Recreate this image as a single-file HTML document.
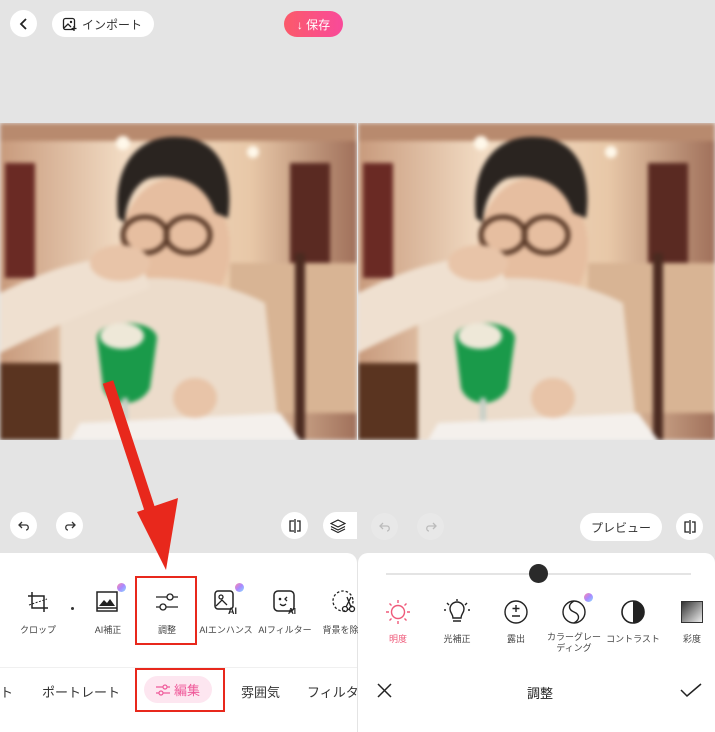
<!DOCTYPE html>
<html><head><meta charset="utf-8"><style>
*{margin:0;padding:0;box-sizing:border-box}
body{width:715px;height:732px;background:#e4e4e4;position:relative;overflow:hidden;font-family:"Liberation Sans","Noto Sans CJK JP",sans-serif;color:#333}
.a{position:absolute}
.circ{position:absolute;width:27px;height:27px;border-radius:50%;background:#fff;display:flex;align-items:center;justify-content:center}
.lbl{position:absolute;font-size:9px;color:#444;text-align:center;white-space:nowrap;transform:translateX(-50%)}
.ic{position:absolute;transform:translate(-50%,-50%)}
.ph{position:absolute;top:123px;width:357px;height:317px;overflow:hidden}
.ph svg{filter:blur(2px)}
</style></head><body>
<svg width="0" height="0" style="position:absolute"><defs>
<linearGradient id="bg" x1="0" y1="0" x2="1" y2="0"><stop offset="0" stop-color="#c89a7c"/><stop offset=".35" stop-color="#f2dcc4"/><stop offset=".7" stop-color="#e8c8a8"/><stop offset="1" stop-color="#a0705a"/></linearGradient>
<symbol id="photo" viewBox="0 0 357 317">
<rect width="357" height="317" fill="url(#bg)"/>
<rect x="0" y="0" width="357" height="18" fill="#b88a6e"/>
<rect x="5" y="40" width="30" height="115" fill="#6a2a24"/>
<rect x="290" y="40" width="40" height="100" fill="#5a2a22"/>
<rect x="230" y="140" width="127" height="150" fill="#d8b494"/>
<rect x="295" y="130" width="10" height="187" fill="#4a2a20"/>
<rect x="0" y="240" width="60" height="77" fill="#5a3420"/>
<circle cx="123" cy="20" r="7" fill="#fff8ea"/><circle cx="253" cy="29" r="6" fill="#fff8ea"/>
<ellipse cx="175" cy="125" rx="55" ry="70" fill="#e6bea0"/>
<path d="M118 95 C112 40 140 12 178 14 C215 14 235 45 228 95 L215 90 C205 60 180 50 150 55 C135 60 125 80 125 100Z" fill="#2a2420"/>
<ellipse cx="145" cy="112" rx="22" ry="18" fill="none" stroke="#5a3a28" stroke-width="5"/>
<ellipse cx="188" cy="112" rx="22" ry="18" fill="none" stroke="#5a3a28" stroke-width="5"/>
<path d="M60 175 C100 150 200 145 265 180 L280 317 L60 317Z" fill="#ecdccb"/>
<path d="M0 170 C40 150 90 130 140 135 L150 165 C110 180 60 200 0 230Z" fill="#efe0d0"/>
<ellipse cx="120" cy="140" rx="30" ry="18" fill="#e8c4a8"/>
<path d="M97 215 C97 195 155 195 157 215 L150 265 C140 285 110 285 103 265Z" fill="#1a9a4a"/>
<ellipse cx="122" cy="213" rx="22" ry="13" fill="#eee8d8"/>
<rect x="122" y="275" width="6" height="30" fill="#c8d0c8"/>
<path d="M80 300 L280 290 L300 317 L70 317Z" fill="#f4f0ec"/>
<ellipse cx="195" cy="275" rx="22" ry="20" fill="#e8c4a8"/>
</symbol></defs></svg>

<div class="circ" style="left:10px;top:10px"><svg width="14" height="14" viewBox="0 0 14 14"><path d="M9 2 L4 7 L9 12" fill="none" stroke="#222" stroke-width="1.8"/></svg></div>
<div class="a" style="left:52px;top:11px;width:102px;height:26px;border-radius:13px;background:#fff;font-size:12px;display:flex;align-items:center;padding-left:10px;gap:5px">
<svg width="15" height="15" viewBox="0 0 15 15"><rect x="1.5" y="1.5" width="11" height="11" rx="2" fill="none" stroke="#222" stroke-width="1.3"/><path d="M2 11 L6 7 L9 10" fill="none" stroke="#222" stroke-width="1.3"/><circle cx="9" cy="5" r="1.2" fill="#222"/><path d="M12 9v5M9.5 11.5h5" stroke="#222" stroke-width="1.3"/></svg>インポート</div>
<div class="a" style="left:284px;top:11px;width:59px;height:26px;border-radius:13px;background:linear-gradient(90deg,#fb5a6a,#f94a9a);color:#fff;font-size:12px;display:flex;align-items:center;justify-content:center;gap:3px">↓ 保存</div>

<div class="ph" style="left:0"><svg width="357" height="317"><use href="#photo"/></svg></div>
<div class="ph" style="left:358px"><svg width="357" height="317"><use href="#photo"/></svg></div>

<div class="circ" style="left:10px;top:512px"><svg width="14" height="14" viewBox="0 0 14 14"><path d="M5 3 L2 6 L5 9 M2 6 H9 C12 6 12 11 9 11" fill="none" stroke="#333" stroke-width="1.3"/></svg></div>
<div class="circ" style="left:56px;top:512px"><svg width="14" height="14" viewBox="0 0 14 14"><path d="M9 3 L12 6 L9 9 M12 6 H5 C2 6 2 11 5 11" fill="none" stroke="#333" stroke-width="1.3"/></svg></div>
<div class="circ" style="left:281px;top:512px"><svg width="16" height="14" viewBox="0 0 16 14"><path d="M7 2H3v10h4M8 0v14M10 2h3v10h-3" fill="none" stroke="#222" stroke-width="1.3"/></svg></div>
<div class="a" style="left:323px;top:512px;width:34px;height:27px;border-radius:14px 0 0 14px;background:#fff;display:flex;align-items:center;padding-left:7px"><svg width="16" height="16" viewBox="0 0 16 16"><path d="M8 2L15 5.5L8 9L1 5.5Z M1 8.5L8 12L15 8.5 M1 11L8 14.5L15 11" fill="none" stroke="#222" stroke-width="1.2"/></svg></div>

<div class="circ" style="left:371px;top:513px;background:#e8e8e8"><svg width="14" height="14" viewBox="0 0 14 14"><path d="M5 3 L2 6 L5 9 M2 6 H9 C12 6 12 11 9 11" fill="none" stroke="#bbb" stroke-width="1.3"/></svg></div>
<div class="circ" style="left:417px;top:513px;background:#e8e8e8"><svg width="14" height="14" viewBox="0 0 14 14"><path d="M9 3 L12 6 L9 9 M12 6 H5 C2 6 2 11 5 11" fill="none" stroke="#bbb" stroke-width="1.3"/></svg></div>
<div class="a" style="left:580px;top:513px;width:82px;height:28px;border-radius:14px;background:#fff;font-size:12px;display:flex;align-items:center;justify-content:center">プレビュー</div>
<div class="circ" style="left:676px;top:513px"><svg width="16" height="14" viewBox="0 0 16 14"><path d="M7 2H3v10h4M8 0v14M10 2h3v10h-3" fill="none" stroke="#222" stroke-width="1.3"/></svg></div>

<div class="a" style="left:0;top:553px;width:357px;height:179px;background:#fff;border-radius:0 10px 0 0"></div>
<div class="a" style="left:0;top:667px;width:357px;height:1px;background:#f0f0f0"></div>
<svg class="ic" style="left:38px;top:602px" width="24" height="24" viewBox="0 0 24 24"><path d="M6 2v16h16 M2 6h16v16" fill="none" stroke="#222" stroke-width="1.5"/><path d="M3 15 L21 9" stroke="#222" stroke-width="1" stroke-dasharray="2 1.5"/></svg>
<div class="a" style="left:71px;top:607px;width:3px;height:3px;border-radius:50%;background:#333"></div>
<svg class="ic" style="left:108px;top:602px" width="26" height="24" viewBox="0 0 26 24"><rect x="2" y="2" width="20" height="19" fill="none" stroke="#222" stroke-width="1.5"/><path d="M4 16 L9 10 L12 13 L15 9 L20 16Z" fill="#222"/><path d="M2 18h20" stroke="#222" stroke-width="1.5"/></svg>
<div class="a" style="left:117px;top:583px;width:9px;height:9px;border-radius:50%;background:linear-gradient(135deg,#f8a,#a8f,#8df)"></div>
<svg class="ic" style="left:167px;top:602px" width="24" height="20" viewBox="0 0 24 20"><path d="M1 5h22M1 15h22" stroke="#222" stroke-width="1.3"/><circle cx="15" cy="5" r="3" fill="#fff" stroke="#222" stroke-width="1.3"/><circle cx="8" cy="15" r="3" fill="#fff" stroke="#222" stroke-width="1.3"/></svg>
<svg class="ic" style="left:226px;top:602px" width="26" height="26" viewBox="0 0 26 26"><rect x="2" y="2" width="18" height="18" rx="3" fill="none" stroke="#222" stroke-width="1.5"/><circle cx="8" cy="8" r="2" fill="none" stroke="#222" stroke-width="1.3"/><path d="M3 17l6-6 5 5" fill="none" stroke="#222" stroke-width="1.3"/><text x="15" y="25" font-size="9" font-weight="bold" fill="#222" font-family="Liberation Sans">AI</text></svg>
<div class="a" style="left:235px;top:583px;width:9px;height:9px;border-radius:50%;background:linear-gradient(135deg,#f8a,#a8f,#8df)"></div>
<svg class="ic" style="left:285px;top:602px" width="26" height="26" viewBox="0 0 26 26"><rect x="2" y="2" width="20" height="20" rx="4" fill="none" stroke="#222" stroke-width="1.5"/><circle cx="8" cy="10" r="1.3" fill="#222"/><path d="M15 8l-2 2 2 2M8 15c2 2 4 2 6 0" fill="none" stroke="#222" stroke-width="1.3"/><text x="16" y="25" font-size="8" font-weight="bold" fill="#222" font-family="Liberation Sans">AI</text></svg>
<svg class="ic" style="left:344px;top:602px" width="26" height="26" viewBox="0 0 26 26"><circle cx="12" cy="12" r="10" fill="none" stroke="#222" stroke-width="1.3" stroke-dasharray="2.5 2"/><circle cx="14" cy="20" r="2.5" fill="none" stroke="#222" stroke-width="1.3"/><circle cx="21" cy="20" r="2.5" fill="none" stroke="#222" stroke-width="1.3"/><path d="M15 18l5-10M20 18l-4-10" stroke="#222" stroke-width="1.3"/></svg>
<div class="lbl" style="left:38px;top:623px">クロップ</div>
<div class="lbl" style="left:108px;top:623px">AI補正</div>
<div class="lbl" style="left:167px;top:623px">調整</div>
<div class="lbl" style="left:226px;top:623px">AIエンハンス</div>
<div class="lbl" style="left:285px;top:623px">AIフィルター</div>
<div class="lbl" style="left:345px;top:623px">背景を除去</div>
<div class="a" style="left:0;top:682px;font-size:13px;color:#333">ト</div>
<div class="a" style="left:42px;top:682px;font-size:13px;color:#333">ポートレート</div>
<div class="a" style="left:144px;top:676px;width:68px;height:27px;border-radius:14px;background:#fde6f0;color:#ef5a9a;font-size:13px;display:flex;align-items:center;justify-content:center;gap:4px"><svg width="14" height="12" viewBox="0 0 14 12"><path d="M0 3h14M0 9h14" stroke="#ef5a9a" stroke-width="1.3"/><circle cx="9" cy="3" r="2" fill="#fde6f0" stroke="#ef5a9a" stroke-width="1.2"/><circle cx="5" cy="9" r="2" fill="#fde6f0" stroke="#ef5a9a" stroke-width="1.2"/></svg>編集</div>
<div class="a" style="left:241px;top:682px;font-size:13px;color:#333">雰囲気</div>
<div class="a" style="left:307px;top:682px;font-size:13px;color:#333;white-space:nowrap;width:50px;overflow:hidden">フィルター</div>

<div class="a" style="left:135px;top:576px;width:62px;height:69px;border:2px solid #e8281c"></div>
<div class="a" style="left:135px;top:668px;width:90px;height:44px;border:2px solid #e8281c"></div>
<svg class="a" style="left:0;top:0" width="360" height="580"><path d="M108 382 L150 510" stroke="#e8281c" stroke-width="11"/><path d="M137 512 L178 498 L166 570Z" fill="#e8281c"/></svg>

<div class="a" style="left:358px;top:553px;width:357px;height:179px;background:#fff;border-radius:10px 10px 0 0"></div>
<div class="a" style="left:386px;top:573px;width:305px;height:2px;background:#e4e4e4"></div>
<div class="a" style="left:529px;top:564px;width:19px;height:19px;border-radius:50%;background:#2a2a2a"></div>
<svg class="ic" style="left:398px;top:612px" width="26" height="26" viewBox="0 0 26 26" stroke="#ef5a7a" stroke-width="1.4" fill="none"><circle cx="13" cy="13" r="6.5"/><path d="M13 1v3M13 22v3M1 13h3M22 13h3M4.5 4.5l2 2M19.5 19.5l2 2M4.5 21.5l2-2M19.5 6.5l2-2"/></svg>
<svg class="ic" style="left:457px;top:612px" width="26" height="26" viewBox="0 0 26 26" stroke="#222" stroke-width="1.4" fill="none"><path d="M9 19 C9 15 6 14 6 10 A7 7 0 0 1 20 10 C20 14 17 15 17 19Z M9 22h8"/><path d="M13 0v2M3 4l2 2M23 4l-2 2M0 11h2M24 11h2"/></svg>
<svg class="ic" style="left:516px;top:612px" width="26" height="26" viewBox="0 0 26 26" stroke="#222" stroke-width="1.4" fill="none"><circle cx="13" cy="13" r="11"/><path d="M13 6v7M9.5 9.5h7M9 17h8"/></svg>
<svg class="ic" style="left:574px;top:612px" width="26" height="26" viewBox="0 0 26 26" stroke="#222" stroke-width="1.4" fill="none"><circle cx="13" cy="13" r="11"/><path d="M13 2 C6 6 8 11 13 13 C18 15 20 20 13 24"/></svg>
<div class="a" style="left:584px;top:593px;width:9px;height:9px;border-radius:50%;background:linear-gradient(135deg,#f8a,#a8f,#8df)"></div>
<svg class="ic" style="left:633px;top:612px" width="26" height="26" viewBox="0 0 26 26"><circle cx="13" cy="13" r="11" fill="none" stroke="#222" stroke-width="1.6"/><path d="M13 2 A11 11 0 0 1 13 24Z" fill="#222"/></svg>
<div class="ic" style="left:692px;top:612px;width:22px;height:22px;border:1.5px solid #333;background:linear-gradient(135deg,#333,#eee)"></div>
<div class="lbl" style="left:398px;top:632px;color:#ef5a7a">明度</div>
<div class="lbl" style="left:457px;top:632px">光補正</div>
<div class="lbl" style="left:516px;top:632px">露出</div>
<div class="lbl" style="left:574px;top:632px;line-height:11px">カラーグレー<br>ディング</div>
<div class="lbl" style="left:633px;top:632px">コントラスト</div>
<div class="lbl" style="left:692px;top:632px">彩度</div>
<svg class="a" style="left:377px;top:683px" width="15" height="15" viewBox="0 0 15 15"><path d="M1 1L14 14M14 1L1 14" stroke="#222" stroke-width="1.5"/></svg>
<div class="a" style="left:527px;top:683px;font-size:13px;color:#222">調整</div>
<svg class="a" style="left:680px;top:683px" width="22" height="15" viewBox="0 0 22 15"><path d="M1 7L7 13L21 1" fill="none" stroke="#222" stroke-width="1.5"/></svg>
</body></html>
